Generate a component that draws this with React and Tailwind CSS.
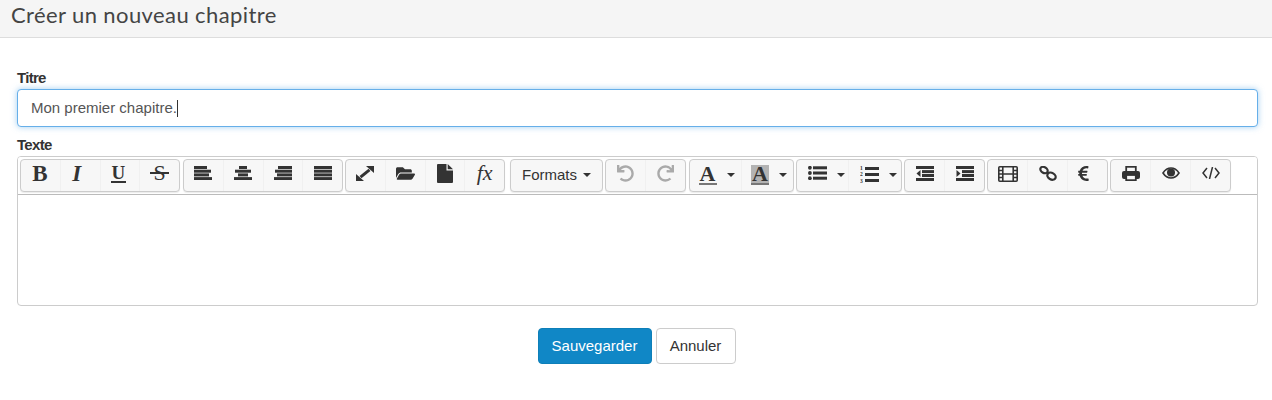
import { FaFolderOpen, FaUndo, FaRedo, FaEuroSign } from "react-icons/fa";

const sans = "font-['Liberation_Sans',Arial,sans-serif]";
const serif = "font-['Liberation_Serif','Times_New_Roman',serif]";

function Caret({ className = "ml-[10px] mt-[4px]" }) {
  return <span className={`inline-block h-0 w-0 border-x-4 border-t-4 border-x-transparent border-t-[#333] ${className}`} />;
}

function Align({ rows }) {
  return (
    <svg width="18" height="14" viewBox="0 0 18 14" fill="#333">
      {rows.map((r, i) => (
        <rect key={i} x={r[0]} y={i * 3.7} width={r[1]} height="3" />
      ))}
    </svg>
  );
}

function Btn({ w = "flex-1", className = "pb-[5px]", children }) {
  return (
    <div className={`flex h-full min-w-0 items-center justify-center border-r border-[#f0f0f0] last:border-r-0 ${w} ${className}`}>
      {children}
    </div>
  );
}

function Group({ className, children }) {
  return (
    <div className={`flex h-[33px] shrink-0 rounded-[4px] border border-[#ccc] bg-[#f7f7f7] shadow-[0_1px_1px_rgba(0,0,0,0.08)] ${className}`}>
      {children}
    </div>
  );
}

function ColorA({ bg }) {
  return (
    <span className={`flex h-[20px] w-[18px] flex-col items-center ${bg ? "bg-[#b3b3b3]" : ""}`}>
      <span className={`${serif} text-[22px] font-bold leading-[18px] text-[#333]`}>A</span>
      <span className="mt-auto h-[2px] w-[18px] bg-[#777]" />
    </span>
  );
}

function Expand() {
  return (
    <svg width="18" height="15" viewBox="0 0 18 15" fill="#333">
      <path d="M10 0h8v7zM0 15h8L0 8z" />
      <path d="M4.500 11.200 13.500 3.800" stroke="#333" strokeWidth="3" />
    </svg>
  );
}

function FileIcon() {
  return (
    <svg width="16" height="19" viewBox="0 0 16 19" fill="#333">
      <path d="M1 0h8.500v6.500H16V18a1 1 0 0 1-1 1H1a1 1 0 0 1-1-1V1a1 1 0 0 1 1-1z" />
      <path d="M10.700 0 16 5.300h-5.300z" />
    </svg>
  );
}

function ListUl() {
  return (
    <svg width="19" height="14" viewBox="0 0 19 14" fill="#333">
      {[1.8, 7, 12.2].map((y) => (
        <g key={y}>
          <circle cx="1.9" cy={y} r="1.9" />
          <rect x="5" y={y - 1.5} width="14" height="3" />
        </g>
      ))}
    </svg>
  );
}

function ListOl() {
  return (
    <svg width="19" height="19" viewBox="0 0 19 19" fill="#333">
      {[5.5, 12, 18.5].map((y, i) => (
        <text key={y} x="0" y={y} fontSize="5.5" fontWeight="700" fontFamily="Liberation Serif">{i + 1}</text>
      ))}
      {[3, 9, 15].map((y) => (
        <rect key={y} x="5" y={y} width="14" height="3" />
      ))}
    </svg>
  );
}

function IndentIcon({ out }) {
  return (
    <svg width="18" height="15" viewBox="0 0 18 15" fill="#333">
      <rect y="0" width="18" height="3" />
      <rect x="6" y="4.100" width="12" height="3" />
      <rect x="6" y="8" width="12" height="3" />
      <rect y="12" width="18" height="3" />
      <path d={out ? "M0.500 7.500 4.500 4v7z" : "M4.500 7.500.5 4v7z"} />
    </svg>
  );
}

function Film() {
  return (
    <svg className="mt-[2px]" width="20" height="16" viewBox="0 0 20 16" fill="none" stroke="#333" strokeWidth="1.6">
      <rect x="0.800" y="0.800" width="18.400" height="14.400" rx="1" />
      <path d="M4.800 1v14M15.200 1v14M5 8h10M1 4.500h4M1 8h4M1 11.500h4M15 4.500h4M15 8h4M15 11.500h4" />
    </svg>
  );
}

function Chain() {
  return (
    <svg width="18" height="15" viewBox="0 0 18 15" fill="none" stroke="#333" strokeWidth="2.2">
      <ellipse cx="5" cy="4" rx="3.900" ry="2.800" transform="rotate(30 5 4)" />
      <ellipse cx="12.500" cy="10.200" rx="4.400" ry="3.300" transform="rotate(30 12.500 10.200)" />
    </svg>
  );
}

function PrintIcon() {
  return (
    <svg width="18" height="15" viewBox="0 0 18 15">
      <rect x="4.200" y="0.800" width="9.600" height="6" fill="none" stroke="#333" strokeWidth="1.800" />
      <rect x="0" y="5" width="18" height="8" rx="2" fill="#333" />
      <rect x="4.200" y="9" width="9.600" height="5.200" fill="#f7f7f7" stroke="#333" strokeWidth="1.800" />
    </svg>
  );
}

function Eye() {
  return (
    <svg width="18" height="12" viewBox="0 0 18 12">
      <path d="M1 6C3.200 2.600 6 1 9 1s5.800 1.600 8 5c-2.200 3.400-5 5-8 5S3.200 9.400 1 6z" fill="none" stroke="#333" strokeWidth="1.600" />
      <circle cx="9" cy="5.400" r="4" fill="#333" />
    </svg>
  );
}

export default function App() {
  return (
    <div className={`h-[400px] w-full bg-white ${sans} text-[15px] text-[#333]`}>
      <div className="flex h-[38px] items-start border-b border-[#ddd] bg-[#f5f5f5] pl-[11px] pt-[3px]">
        <h1 className="font-['Lato',sans-serif] text-[22px] font-normal leading-[24px] tracking-[0.4px] text-[#444]">Créer un nouveau chapitre</h1>
      </div>

      <div className="pl-[17px] pr-[14px] pt-[32px]">
        <label className="block h-[19px] text-[15px] font-bold leading-[16px] tracking-[-0.7px]">Titre</label>
        <div className="flex h-[38px] items-center rounded-[4px] border border-[#66afe9] bg-white pl-[13px] text-[#555] shadow-[0_0_6px_rgba(102,175,233,0.6)]">
          Mon premier chapitre.<span className="h-[17px] w-px bg-[#333]" />
        </div>

        <label className="mt-[9px] block h-[20px] text-[15px] font-bold leading-[18px] tracking-[-0.7px]">Texte</label>
        <div className="h-[150px] overflow-hidden rounded-[4px] border border-[#ccc]">
          <div className="flex h-[38px] items-start border-b border-[#bbb] bg-white pl-[2px] pt-[2px]">
            <Group className="w-[160px]">
              <Btn><span className={`mr-[1px] ${serif} text-[23px] font-bold leading-none`}>B</span></Btn>
              <Btn><span className={`mr-[7px] ${serif} text-[23px] font-bold italic leading-none`}>I</span></Btn>
              <Btn>
                <span className={`mr-[3px] ${serif} border-b-2 border-[#333] px-px text-[19px] font-bold leading-[17px]`}>U</span>
              </Btn>
              <Btn>
                <span className={`relative ${serif} text-[22px] leading-none`}>
                  S
                  <span className="absolute left-[-4px] top-[10px] h-[2px] w-[19px] bg-[#333]" />
                </span>
              </Btn>
            </Group>
            <Group className="ml-[3px] w-[160px]">
              <Btn><Align rows={[[0, 13], [0, 17], [0, 15], [0, 18]]} /></Btn>
              <Btn><Align rows={[[5, 8], [1, 16], [4, 10], [0, 18]]} /></Btn>
              <Btn><Align rows={[[4, 14], [1, 17], [3, 15], [0, 18]]} /></Btn>
              <Btn><Align rows={[[0, 18], [0, 18], [0, 18], [0, 18]]} /></Btn>
            </Group>
            <Group className="ml-[2px] w-[160px]">
              <Btn><Expand /></Btn>
              <Btn><FaFolderOpen size={19} /></Btn>
              <Btn><FileIcon /></Btn>
              <Btn><span className={`${serif} text-[22px] italic leading-none`}>fx</span></Btn>
            </Group>
            <Group className="ml-[5px] w-[93px]">
              <Btn w="w-full" className="pb-[1px]"><span>Formats</span><Caret className="ml-[6px]" /></Btn>
            </Group>
            <Group className="ml-[2px] w-[81px]">
              <Btn><FaUndo size={17} className="text-[#aaa]" /></Btn>
              <Btn><FaRedo size={17} className="text-[#aaa]" /></Btn>
            </Group>
            <Group className="ml-[3px] w-[105px]">
              <Btn w="w-[52px]" className="pb-[2px] pl-[2px]"><ColorA /><Caret className="ml-[10px]" /></Btn>
              <Btn className="pb-[2px] pl-[3px]"><ColorA bg /><Caret className="ml-[10px]" /></Btn>
            </Group>
            <Group className="ml-[2px] w-[106px]">
              <Btn w="w-[52px]" className="pb-[5px] pl-[7px]"><ListUl /><Caret /></Btn>
              <Btn className="pb-[5px] pl-[7px]"><ListOl /><Caret /></Btn>
            </Group>
            <Group className="ml-[2px] w-[81px]">
              <Btn><IndentIcon out /></Btn>
              <Btn><IndentIcon /></Btn>
            </Group>
            <Group className="ml-[2px] w-[121px]">
              <Btn><Film /></Btn>
              <Btn><Chain /></Btn>
              <Btn><FaEuroSign size={17} className="mr-[8px]" /></Btn>
            </Group>
            <Group className="ml-[2px] w-[121px]">
              <Btn><PrintIcon /></Btn>
              <Btn><Eye /></Btn>
              <Btn>
                <svg width="18" height="12" viewBox="0 0 18 12" fill="none" stroke="#333" strokeWidth="1.5">
                  <path d="M5 1 1 6l4 5M13 1l4 5-4 5M10.500 0 7.500 12" />
                </svg>
              </Btn>
            </Group>
          </div>
        </div>

        <div className="mt-[22px] flex justify-center gap-1 pr-[2px]">
          <button className="h-9 w-[114px] rounded-[4px] border border-[#0e7fb8] bg-[#1087c6] text-white">Sauvegarder</button>
          <button className="h-9 w-[80px] rounded-[4px] border border-[#ccc] bg-white text-[#333]">Annuler</button>
        </div>
      </div>
    </div>
  );
}
